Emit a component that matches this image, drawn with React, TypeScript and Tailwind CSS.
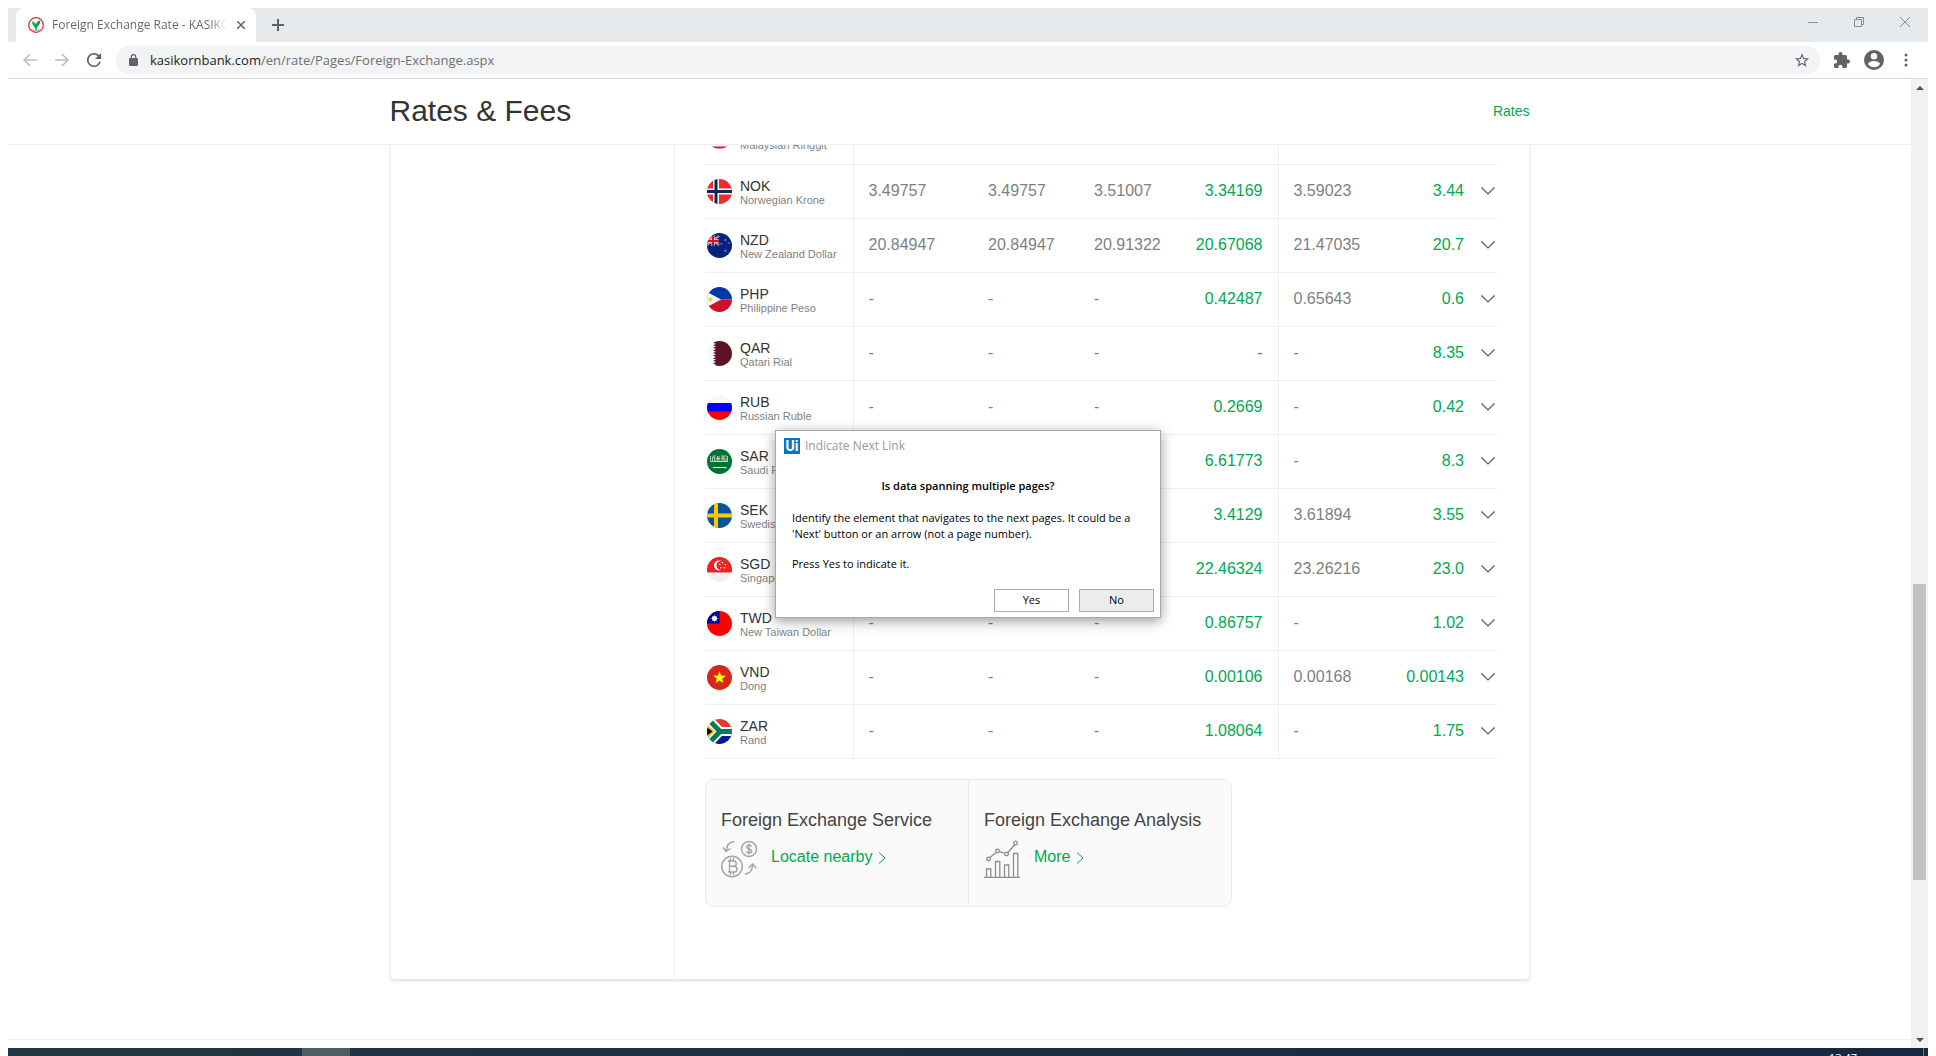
import React, { ReactNode } from "react";

type Row = { code: string; name: string; values: [string, string, string, string, string, string] };

const rows: Row[] = [
  { code: "MYR", name: "Malaysian Ringgit", values: ["", "", "", "", "", ""] },
  { code: "NOK", name: "Norwegian Krone", values: ["3.49757", "3.49757", "3.51007", "3.34169", "3.59023", "3.44"] },
  { code: "NZD", name: "New Zealand Dollar", values: ["20.84947", "20.84947", "20.91322", "20.67068", "21.47035", "20.7"] },
  { code: "PHP", name: "Philippine Peso", values: ["-", "-", "-", "0.42487", "0.65643", "0.6"] },
  { code: "QAR", name: "Qatari Rial", values: ["-", "-", "-", "-", "-", "8.35"] },
  { code: "RUB", name: "Russian Ruble", values: ["-", "-", "-", "0.2669", "-", "0.42"] },
  { code: "SAR", name: "Saudi Riyal", values: ["-", "-", "-", "6.61773", "-", "8.3"] },
  { code: "SEK", name: "Swedish Krona", values: ["-", "-", "-", "3.4129", "3.61894", "3.55"] },
  { code: "SGD", name: "Singapore Dollar", values: ["-", "-", "22.72222", "22.46324", "23.26216", "23.0"] },
  { code: "TWD", name: "New Taiwan Dollar", values: ["-", "-", "-", "0.86757", "-", "1.02"] },
  { code: "VND", name: "Dong", values: ["-", "-", "-", "0.00106", "0.00168", "0.00143"] },
  { code: "ZAR", name: "Rand", values: ["-", "-", "-", "1.08064", "-", "1.75"] },
];

const star = (cx: number, cy: number, r: number) =>
  Array.from({ length: 10 }, (_, i) => {
    const a = (Math.PI / 5) * i - Math.PI / 2;
    const q = i % 2 ? r * 0.4 : r;
    return `${cx + q * Math.cos(a)},${cy + q * Math.sin(a)}`;
  }).join(" ");

const flags: Record<string, ReactNode> = {
  MYR: (
    <>
      <rect width="25" height="25" fill="#f5f5f5" />
      <path d="M0 2h25M0 6h25M0 10h25M0 14h25M0 18h25M0 23.500h25" stroke="#cc1f26" strokeWidth="2" />
    </>
  ),
  NOK: (
    <>
      <rect width="25" height="25" fill="#ef2b2d" />
      <path d="M9 0v25M0 12.500h25" stroke="#fff" strokeWidth="6" />
      <path d="M9 0v25M0 12.500h25" stroke="#002868" strokeWidth="3" />
    </>
  ),
  NZD: (
    <>
      <rect width="25" height="25" fill="#00247d" />
      <path d="M0 3l12 9M12 3L0 12" stroke="#fff" strokeWidth="2" />
      <path d="M0 3l12 9M12 3L0 12" stroke="#cc142b" />
      <path d="M6 2v11M0 8h12" stroke="#fff" strokeWidth="3" />
      <path d="M6 2v11M0 8h12" stroke="#cc142b" strokeWidth="2" />
      <g fill="#d4566f">
        <polygon points={star(18.5, 7, 1.8)} />
        <polygon points={star(22, 10, 1.5)} />
        <polygon points={star(14.5, 11, 1.5)} />
        <polygon points={star(18.5, 18, 2)} />
      </g>
    </>
  ),
  PHP: (
    <>
      <rect width="25" height="12.5" fill="#0038a8" />
      <rect y="12.5" width="25" height="12.5" fill="#ce1126" />
      <path d="M0 5l14 7.500L0 20z" fill="#fff" />
      <path d="M3.500 9.500v6M.5 12.500h6M1.500 10.500l4 4M5.500 10.500l-4 4" stroke="#fcd116" strokeWidth=".7" />
      <circle cx="3.5" cy="12.5" r="1.8" fill="#fcd116" />
      <circle cx="9.5" cy="12.5" r=".7" fill="#fcd116" />
    </>
  ),
  QAR: (
    <>
      <rect width="25" height="25" fill="#f7f7f7" />
      <path d="M6 0h19v25H6l3-1.300-3-1.300 3-1.300-3-1.300 3-1.300-3-1.300 3-1.300-3-1.300 3-1.300-3-1.300 3-1.300-3-1.300 3-1.300-3-1.300 3-1.300-3-1.300 3-1.300-3-1.300z" fill="#5e1224" />
    </>
  ),
  RUB: (
    <>
      <rect width="25" height="25" fill="#f8f8f8" />
      <rect y="8" width="25" height="9" fill="#0000fe" />
      <rect y="16.5" width="25" height="9" fill="#fe0000" />
    </>
  ),
  SAR: (
    <>
      <rect width="25" height="25" fill="#00722f" />
      <path d="M3.500 7v5.500h2V8h2v4h3V7M8.500 9.500h5M12 7v5.500h3V8h2v4h3.500V7M15 10h6M4 12.500h17M6 7h3M14 7h6" fill="none" stroke="#d5e6da" strokeWidth=".8" />
      <path d="M6 18.500h13v1" fill="none" stroke="#fff" strokeWidth=".9" />
    </>
  ),
  SEK: (
    <>
      <rect width="25" height="25" fill="#0b5394" />
      <path d="M9 0v25M0 12.500h25" stroke="#fdc70c" strokeWidth="4" />
    </>
  ),
  SGD: (
    <>
      <rect width="25" height="25" fill="#f2f2f2" />
      <rect width="25" height="15.5" fill="#ed2024" />
      <circle cx="12" cy="8.5" r="5" fill="#fff" />
      <circle cx="14" cy="8.5" r="4.5" fill="#ed2024" />
      <g fill="#fff">
        <circle cx="15.5" cy="5.5" r=".8" />
        <circle cx="18.5" cy="7.5" r=".8" />
        <circle cx="12.8" cy="7.5" r=".8" />
        <circle cx="13.8" cy="10.8" r=".8" />
        <circle cx="17.5" cy="10.8" r=".8" />
      </g>
    </>
  ),
  TWD: (
    <>
      <rect width="25" height="25" fill="#fe0000" />
      <rect width="12.5" height="12.5" fill="#000095" />
      <path d="M7.500 3.500v8M3.500 7.500h8M4.700 4.700l5.600 5.600M10.300 4.700l-5.600 5.600" stroke="#c9c9ee" strokeWidth=".6" />
      <circle cx="7.500" cy="7.500" r="2.500" fill="#fff" />
    </>
  ),
  VND: (
    <>
      <rect width="25" height="25" fill="#da251d" />
      <polygon points={star(12.5, 12.8, 6.8)} fill="#ff0" />
    </>
  ),
  ZAR: (
    <>
      <rect width="25" height="12.5" fill="#e23d34" />
      <rect y="12.5" width="25" height="12.5" fill="#001c96" />
      <path d="M0 -1l13 13.500L0 26M12 12.500h13" fill="none" stroke="#fff" strokeWidth="9" />
      <path d="M0 -1l13 13.500L0 26M12 12.500h13" fill="none" stroke="#007c59" strokeWidth="5" />
      <path d="M0 6l8 6.500L0 19z" fill="#ffb915" />
      <path d="M0 8.500l5.500 4L0 16.500z" fill="#000" />
    </>
  ),
};

function Flag({ code }: { code: string }) {
  return (
    <svg viewBox="0 0 25 25" className="size-[25px] shrink-0 rounded-full" aria-hidden="true">
      {flags[code]}
    </svg>
  );
}

function TabStrip() {
  return (
    <div className="flex h-[34px] items-stretch bg-[#e7eaed] pl-2">
      <div className="flex w-60 items-center rounded-t-lg bg-white pl-3 pr-2">
        <svg viewBox="0 0 16 16" className="size-4 shrink-0" aria-hidden="true">
          <circle cx="8" cy="8" r="7.3" fill="#fff" stroke="#e7263c" strokeWidth="1.3" />
          <path d="M3 12.500h10a6.500 6.500 0 0 1-10 0z" fill="#b9aea8" />
          <path d="M7.500 12.500C7.200 9.500 4.500 9.500 4 4.500c2 .2 3.300 1.500 3.800 3C8.500 5 10 3.500 12.300 3.300c.2 3-.8 4.700-2.300 5.700-1 .8-1 2-1 3.500z" fill="#0fa551" />
        </svg>
        <span className="ml-2 w-[175px] shrink-0 overflow-hidden whitespace-nowrap bg-gradient-to-r from-[#5f6368] from-90% to-transparent bg-clip-text text-xs text-transparent">
          Foreign Exchange Rate - KASIKORNBANK
        </span>
        <button aria-label="Close tab" className="ml-1.5 flex size-4 items-center justify-center">
          <svg viewBox="0 0 8 8" className="size-2" stroke="#5f6368" strokeWidth="1.500" aria-hidden="true">
            <path d="M0 0l8 8M8 0L0 8" />
          </svg>
        </button>
      </div>
      <button aria-label="New tab" className="flex w-11 items-center justify-center">
        <svg viewBox="0 0 12 12" className="size-3" stroke="#5f6368" strokeWidth="2" aria-hidden="true">
          <path d="M6 0v12M0 6h12" />
        </svg>
      </button>
      <div className="ml-auto flex h-7 items-center">
        <button aria-label="Minimize" className="flex h-7 w-[46px] items-center justify-center">
          <svg viewBox="0 0 10 10" className="size-2.5" stroke="#8a8c8e" aria-hidden="true"><path d="M0 5.500h10" /></svg>
        </button>
        <button aria-label="Restore" className="flex h-7 w-[46px] items-center justify-center">
          <svg viewBox="0 0 10 10" className="size-2.5" fill="none" stroke="#8a8c8e" aria-hidden="true">
            <path d="M.5 2.500h7v7h-7zM2.500 2.500v-2h7v7h-2" />
          </svg>
        </button>
        <button aria-label="Close" className="flex h-7 w-[46px] items-center justify-center">
          <svg viewBox="0 0 10 10" className="size-2.5" stroke="#8a8c8e" aria-hidden="true"><path d="M0 0l10 10M10 0L0 10" /></svg>
        </button>
      </div>
    </div>
  );
}

function Toolbar() {
  return (
    <div className="flex h-[37px] items-center border-b border-[#d9dbdd] bg-white pl-3">
      <button aria-label="Back" className="flex size-5 items-center justify-center">
        <svg viewBox="4 4 16 16" className="size-4" fill="#bbbdbf" aria-hidden="true"><path d="M19 11.200H8l4.600-4.600L11.500 5.500 5 12l6.500 6.500 1.100-1.100L8 12.800h11z" /></svg>
      </button>
      <button aria-label="Forward" className="ml-3 flex size-5 items-center justify-center">
        <svg viewBox="4 4 16 16" className="size-4" fill="#bbbdbf" aria-hidden="true"><path d="M5 11.200h11l-4.600-4.600 1.100-1.100L19 12l-6.500 6.500-1.100-1.100 4.600-4.600H5z" /></svg>
      </button>
      <button aria-label="Reload" className="ml-3 flex size-5 items-center justify-center">
        <svg viewBox="3 3 18 18" className="size-4" fill="#5f6368" aria-hidden="true">
          <path d="M17.650 6.350A7.960 7.960 0 0 0 12 4a8 8 0 1 0 7.730 10h-2.080A6 6 0 1 1 12 6c1.660 0 3.140.69 4.220 1.780L13 11h7V4z" />
        </svg>
      </button>
      <div className="ml-3 flex h-7 flex-1 items-center rounded-full bg-[#f1f3f4] pl-[13px] pr-2.5">
        <svg viewBox="4 1 16 21" className="h-3 w-[9px] shrink-0" fill="#5f6368" aria-hidden="true">
          <path d="M18 8h-1V6A5 5 0 0 0 7 6v2H6a2 2 0 0 0-2 2v10c0 1.100.9 2 2 2h12a2 2 0 0 0 2-2V10a2 2 0 0 0-2-2zM9 8V6a3 3 0 0 1 6 0v2z" />
        </svg>
        <a href="#" className="ml-3 text-[13px] leading-5 text-[#6c7075]">
          <span className="text-[#202124]">kasikornbank.com</span>/en/rate/Pages/Foreign-Exchange.aspx
        </a>
        <button aria-label="Bookmark this page" className="ml-auto flex size-4 items-center justify-center">
          <svg viewBox="2 2 20 19" className="size-3.5" fill="#5f6368" aria-hidden="true">
            <path d="M22 9.240l-7.190-.62L12 2 9.190 8.630 2 9.240l5.460 4.730L5.820 21 12 17.270 18.180 21l-1.630-7.030zM12 15.400l-3.760 2.270 1-4.280-3.320-2.880 4.380-.38L12 6.100l1.710 4.040 4.380.38-3.320 2.880 1 4.280z" />
          </svg>
        </button>
      </div>
      <div className="ml-3.5 mr-4 flex items-center">
        <button aria-label="Extensions" className="size-4">
          <svg viewBox="2 1 21 21" className="size-4" fill="#5f6368" aria-hidden="true">
            <path d="M20.500 11H19V7a2 2 0 0 0-2-2h-4V3.500a2.500 2.500 0 0 0-5 0V5H4a2 2 0 0 0-2 2v3.800h1.500a2.700 2.700 0 0 1 0 5.400H2V20c0 1.100.9 2 2 2h3.800v-1.500a2.700 2.700 0 0 1 5.400 0V22H17a2 2 0 0 0 2-2v-4h1.500a2.500 2.500 0 0 0 0-5z" />
          </svg>
        </button>
        <button aria-label="Profile" className="ml-3.5 size-5">
          <svg viewBox="2 2 20 20" className="size-5" fill="#5f6368" aria-hidden="true">
            <path d="M12 2a10 10 0 1 0 0 20 10 10 0 0 0 0-20zm0 3a3.200 3.200 0 1 1 0 6.400A3.200 3.200 0 0 1 12 5zm0 14.200a7.200 7.200 0 0 1-6-3.220c.03-1.990 4-3.080 6-3.080s5.970 1.090 6 3.080a7.200 7.200 0 0 1-6 3.220z" />
          </svg>
        </button>
        <button aria-label="Menu" className="ml-4 flex w-3 justify-center">
          <svg viewBox="0 0 4 14" className="h-3.5 w-1" fill="#5f6368" aria-hidden="true">
            <circle cx="2" cy="2" r="1.5" /><circle cx="2" cy="7" r="1.5" /><circle cx="2" cy="12" r="1.5" />
          </svg>
        </button>
      </div>
    </div>
  );
}

function RatesTable() {
  const num = "pl-[15px] text-left text-base text-[#7f7f7f]";
  const green = "text-right text-base text-[#00a950]";
  return (
    <table className="-mt-[35px] w-full table-fixed border-collapse">
      <colgroup>
        <col className="w-[148px]" />
        <col className="w-[120px]" />
        <col className="w-[106px]" />
        <col className="w-[84px]" />
        <col className="w-[115px]" />
        <col className="w-[84px]" />
        <col className="w-[102px]" />
        <col />
      </colgroup>
      <tbody>
        {rows.map((r) => (
          <tr key={r.code} className="h-[54px] border-b border-[#eeeeee]">
            <th scope="row" className="border-r border-[#eeeeee] p-0 pl-0.5 text-left font-normal">
              <div className="flex items-center gap-2">
                <Flag code={r.code} />
                <div className="whitespace-nowrap pt-px">
                  <div className="text-sm leading-4 text-[#333333]">{r.code}</div>
                  <div className="text-[11px] leading-3 text-[#7f7f7f]">{r.name}</div>
                </div>
              </div>
            </th>
            <td className={num}>{r.values[0]}</td>
            <td className={num}>{r.values[1]}</td>
            <td className={num}>{r.values[2]}</td>
            <td className={`border-r border-[#eeeeee] pr-[15px] ${green}`}>{r.values[3]}</td>
            <td className={num}>{r.values[4]}</td>
            <td className={green}>{r.values[5]}</td>
            <td className="pr-0.5">
              <button aria-label={`Show ${r.code} details`} className="ml-auto flex h-4 w-3.5 items-center">
                <svg viewBox="0 0 14 8" className="h-2 w-3.5" fill="none" stroke="#555" strokeWidth="1.1" aria-hidden="true"><path d="M.5 .5L7 7l6.500-6.500" /></svg>
              </button>
            </td>
          </tr>
        ))}
      </tbody>
    </table>
  );
}

function ExchangeIcon() {
  return (
    <svg viewBox="0 0 36 38" className="h-[38px] w-9" fill="none" stroke="#a3a3a3" strokeWidth="1.4" aria-hidden="true">
      <circle cx="28" cy="9" r="7.5" />
      <circle cx="11" cy="26.5" r="10.3" />
      <path d="M30.500 6.500C30 4.500 25.700 4.600 25.700 7c0 2.500 5 1.500 5 4.200 0 2.300-4.700 2.400-5.200.2M28 3.500v11" />
      <path d="M7 21h5.500c3.700 0 3.700 5.300 0 5.300H9M8.500 21v11M7 32h6c4 0 4-5.700 0-5.700M9.500 18v3M12.500 18v3M9.500 32v3M12.500 32v3" />
      <path d="M13.500 1.500C8.500 2 5.500 5 5.200 11M2 7.500l3.200 3.800L9.500 8.500" />
      <path d="M24 34c5-.5 7.500-4 7.700-9.500M27.500 28l4.200-4 3.800 4.300" />
    </svg>
  );
}

function AnalysisIcon() {
  return (
    <svg viewBox="0 0 36 38" className="h-[38px] w-9" fill="none" stroke="#8e8e8e" strokeWidth="1.3" aria-hidden="true">
      <path d="M0 37.300h36M2.500 37v-8h4.300v8M11.500 37V21.500h4.300V37M20.500 37V25h4.300v12M29.500 37V13.500h4.300V37" />
      <path d="M6 17.500l6-5M15.200 11.300l6 2.200M24 12.500l6.800-8" />
      <circle cx="4.5" cy="19" r="1.8" /><circle cx="13.5" cy="11" r="1.8" /><circle cx="22.5" cy="14" r="1.8" /><circle cx="31.5" cy="3" r="1.8" />
    </svg>
  );
}

function ServiceCard({ title, link, icon }: { title: string; link: string; icon: ReactNode }) {
  return (
    <section className="flex-1 px-[15px] pb-7 pt-7">
      <h2 className="text-lg leading-6 text-[#444444]">{title}</h2>
      <div className="mt-2 flex items-center gap-3.5">
        {icon}
        <a href="#" className="flex items-center gap-1.5 pb-1 text-base leading-6 text-[#00a950]">
          {link}
          <svg viewBox="0 0 8 12" className="mt-0.5 h-3 w-2" fill="none" stroke="#00a950" aria-hidden="true"><path d="M1 .5L7 6l-6 5.500" /></svg>
        </a>
      </div>
    </section>
  );
}

function Dialog() {
  return (
    <div role="dialog" aria-labelledby="dialog-title" className="absolute left-[767px] top-[422px] w-[386px] border border-[#a8a8a8] bg-white pb-[5px] text-[11px] text-black shadow-[0_3px_12px_rgba(0,0,0,0.4)]">
      <div className="flex h-[29px] items-center gap-[5px] pl-2">
        <span className="flex size-4 items-center justify-center bg-[#0a74bd] font-['Roboto'] text-sm font-bold leading-4 text-white">Ui</span>
        <h2 id="dialog-title" className="text-xs text-[#999999]">Indicate Next Link</h2>
      </div>
      <p className="mt-[18px] text-center font-semibold leading-4">Is data spanning multiple pages?</p>
      <p className="mt-4 px-4 leading-4">Identify the element that navigates to the next pages. It could be a 'Next' button or an arrow (not a page number).</p>
      <p className="mt-3.5 px-4 leading-4">Press Yes to indicate it.</p>
      <div className="mt-[17px] flex justify-end gap-2.5 pr-1.5">
        <button className="h-[23px] w-[75px] border border-[#adadad] bg-white">Yes</button>
        <button className="h-[23px] w-[75px] border border-[#adadad] bg-[#ececec]">No</button>
      </div>
    </div>
  );
}

function ScrollBar() {
  return (
    <div className="flex w-[17px] shrink-0 flex-col items-center bg-[#f1f1f1]">
      <button aria-label="Scroll up" className="flex h-[17px] w-full items-center justify-center">
        <svg viewBox="0 0 8 4" className="h-1 w-2" fill="#505050" aria-hidden="true"><path d="M0 4l4-4 4 4z" /></svg>
      </button>
      <div className="w-full grow-[488]" />
      <div className="w-[13px] grow-[296] bg-[#c1c1c1]" />
      <div className="w-full grow-[151]" />
      <button aria-label="Scroll down" className="flex h-[17px] w-full items-center justify-center">
        <svg viewBox="0 0 8 4" className="h-1 w-2" fill="#505050" aria-hidden="true"><path d="M0 0l4 4 4-4z" /></svg>
      </button>
    </div>
  );
}

export default function App() {
  return (
    <div className="h-screen overflow-hidden bg-white px-2 pt-2 font-['Open_Sans','Noto_Sans',sans-serif]">
      <div className="relative flex h-full flex-col">
        <TabStrip />
        <Toolbar />
        <div className="flex min-h-0 flex-1 font-['Liberation_Sans',Arial,sans-serif]">
          <main className="flex min-w-0 flex-1 flex-col">
            <header className="h-[66px] shrink-0 border-b border-[#eeeeee]">
              <div className="mx-auto flex h-full max-w-[1140px] items-center justify-between pb-0.5">
                <h1 className="text-[30px] leading-9 text-[#333333]">Rates &amp; Fees</h1>
                <a href="#" className="text-sm text-[#00a950]">Rates</a>
              </div>
            </header>
            <div className="flex w-full flex-1 flex-col overflow-hidden">
              <div className="mx-auto flex w-full max-w-[1140px] flex-1 rounded-b border-x border-[#f1f1f1] shadow-[0_2px_3px_rgba(0,0,0,0.12)]">
                <aside className="w-1/4 shrink-0 border-r border-[#eeeeee]" />
                <div className="min-w-0 flex-1 pl-[30px] pr-8">
                  <RatesTable />
                  <div className="mt-5 flex w-[527px] divide-x divide-[#ececec] rounded-lg border border-[#ececec] bg-[#fafafa]">
                    <ServiceCard title="Foreign Exchange Service" link="Locate nearby" icon={<ExchangeIcon />} />
                    <ServiceCard title="Foreign Exchange Analysis" link="More" icon={<AnalysisIcon />} />
                  </div>
                </div>
              </div>
              <div className="mb-2 h-[61px] shrink-0 border-b border-[#eeeeee]" />
            </div>
          </main>
          <ScrollBar />
        </div>
        <footer className="flex h-2 shrink-0 overflow-hidden bg-gradient-to-r from-[#213740] to-[#182742]">
          <div className="ml-[294px] w-12 bg-[#4d5d65]" />
          <time className="ml-auto mt-1 text-[11px] leading-3 text-white">13:47</time>
          <div className="ml-[66px] mr-1 w-px bg-[#6b7689]" />
        </footer>
        <Dialog />
      </div>
    </div>
  );
}
